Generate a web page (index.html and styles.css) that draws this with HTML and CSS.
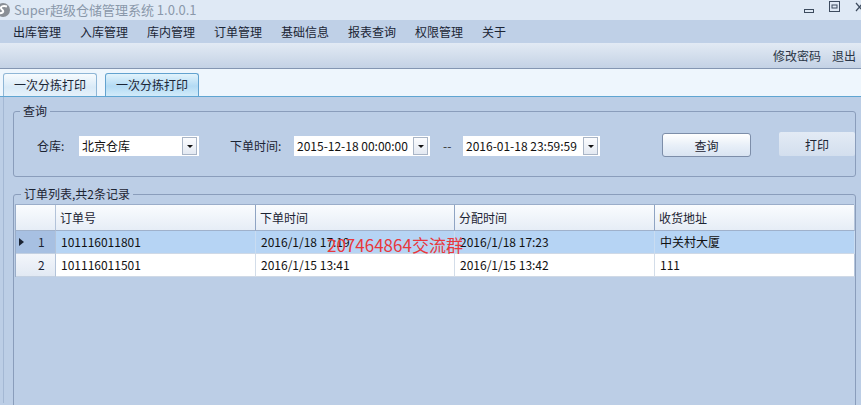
FILE: index.html
```html
<!DOCTYPE html>
<html lang="zh-CN">
<head>
<meta charset="utf-8">
<title>Super超级仓储管理系统 1.0.0.1</title>
<link rel="stylesheet" href="styles.css">
</head>
<body>
<div class="titlebar">
  <svg class="logo" width="14" height="16" viewBox="0 0 14 16"><circle cx="3" cy="8" r="7" fill="#8a8f96"/><path d="M7 4.5 C3 3 -1 5 2 7.5 C5 9.5 2 12 -2 11" stroke="#fff" stroke-width="2" fill="none"/></svg>
  <span class="title">Super超级仓储管理系统 1.0.0.1</span>
  <div class="winctl">
    <svg width="12" height="12" viewBox="0 0 12 12"><rect x="1.5" y="5.5" width="9" height="3" fill="none" stroke="#3d4b5e"/></svg>
    <svg width="12" height="12" viewBox="0 0 12 12" class="max"><rect x="0.5" y="0.5" width="10" height="10" fill="none" stroke="#3d4b5e"/><rect x="3" y="4" width="5" height="3" fill="none" stroke="#3d4b5e"/></svg>
    <svg width="6" height="12" viewBox="0 0 6 12" class="cls"><path d="M1 2 L8 10 M8 2 L1 10" stroke="#3d4b5e" stroke-width="1.2"/></svg>
  </div>
</div>
<nav class="menubar">
  <span>出库管理</span><span>入库管理</span><span>库内管理</span><span>订单管理</span><span>基础信息</span><span>报表查询</span><span>权限管理</span><span>关于</span>
</nav>
<div class="toolbar">
  <span>修改密码</span><span>退出</span>
</div>
<div class="tabstrip">
  <div class="tab">一次分拣打印</div>
  <div class="tab active">一次分拣打印</div>
</div>
<div class="page">
  <fieldset class="group query">
    <legend>查询</legend>
    <div class="qrow">
      <span class="lbl lbl-wh">仓库:</span>
      <div class="combo c1"><span>北京仓库</span><i class="dd"></i></div>
      <span class="lbl lbl-time">下单时间:</span>
      <div class="combo c2"><span>2015-12-18 00:00:00</span><i class="dd"></i></div>
      <span class="lbl lbl-dash">--</span>
      <div class="combo c3"><span>2016-01-18 23:59:59</span><i class="dd"></i></div>
      <button class="btn btn-q">查询</button>
      <button class="btn btn-p">打印</button>
    </div>
  </fieldset>
  <fieldset class="group orders">
    <legend>订单列表,共2条记录</legend>
    <div class="gridwrap">
      <div class="grid">
        <div class="hc rh"></div>
        <div class="hc">订单号</div>
        <div class="hc">下单时间</div>
        <div class="hc">分配时间</div>
        <div class="hc last">收货地址</div>

        <div class="rh sel"><span class="arrow"></span><span class="rn">1</span></div>
        <div class="dc sel">101116011801</div>
        <div class="dc sel">2016/1/18 17:19</div>
        <div class="dc sel">2016/1/18 17:23</div>
        <div class="dc sel last">中关村大厦</div>

        <div class="rh"><span class="rn">2</span></div>
        <div class="dc">101116011501</div>
        <div class="dc">2016/1/15 13:41</div>
        <div class="dc">2016/1/15 13:42</div>
        <div class="dc last">111</div>
      </div>
      <div class="watermark">207464864交流群</div>
    </div>
  </fieldset>
</div>
</body>
</html>
```
FILE: styles.css
```css
* { box-sizing: border-box; }
html, body {
  margin: 0;
  width: 861px;
  height: 405px;
  overflow: hidden;
}
body {
  background: #bccee6;
  font-family: "Noto Sans CJK SC", "Microsoft YaHei", sans-serif;
  font-size: 12px;
  color: #1c2433;
}
.titlebar {
  height: 20px;
  background: #dfe9f5;
  display: flex;
  align-items: center;
  position: relative;
}
.logo { margin-left: 0; flex: none; }
.title {
  margin-left: 0;
  font-size: 13px;
  color: #8a98aa;
  line-height: 20px;
}
.winctl {
  margin-left: auto;
  display: flex;
  align-items: center;
  gap: 14px;
  height: 20px;
}
.winctl .max { margin-top: -6px; }
.winctl .cls { margin-top: -6px; margin-left: 0; }
.menubar {
  height: 23px;
  background: #bfd0e7;
  display: flex;
  align-items: center;
  padding-left: 4px;
}
.menubar span {
  padding: 0 9.5px 0 9.5px;
  line-height: 23px;
  color: #1b2535;
}
.menubar span:first-child { padding-left: 9px; }
.toolbar {
  height: 26px;
  background: linear-gradient(#e2eaf4, #c4d2e5);
  border-bottom: 1px solid #8496b2;
  display: flex;
  justify-content: flex-end;
  align-items: center;
  gap: 11px;
  padding-right: 5px;
  color: #2a3546;
}
.tabstrip {
  height: 28px;
  background: #eef6fd;
  border-bottom: 1px solid #5fa5d2;
  display: flex;
  align-items: flex-end;
  padding-left: 3px;
  gap: 8px;
}
.tab {
  width: 94px;
  height: 23px;
  border: 1px solid #8fb6d6;
  border-bottom: none;
  border-radius: 3px 3px 0 0;
  background: linear-gradient(#f7fbfe, #d9eaf7 60%, #e6f1fa);
  text-align: center;
  line-height: 21px;
  color: #1b2535;
}
.tab.active {
  border-color: #62a2cf;
  background: linear-gradient(#e2f3fc, #b3dbf4 55%, #d2ebf9);
}
.page {
  margin-left: 3px;
  border-left: 1px solid #a4b8d4;
  height: 306px;
  padding-top: 6px;
}
.group {
  margin: 0 5px 0 9px;
  border: 1px solid #8a9dbb;
  border-radius: 3px;
  padding: 0;
  min-width: 0;
}
.group legend {
  margin-left: 6px;
  padding: 0 3px;
  line-height: 16px;
  font-size: 12px;
  color: #1c2433;
}
.query {
  padding: 14px 0 19px 0;
}
.qrow {
  display: flex;
  align-items: flex-start;
  height: 24px;
  padding-left: 23px;
}
.lbl {
  line-height: 20px;
  margin-top: 3px;
  flex: none;
}
.lbl-wh { width: 42px; }
.lbl-time { margin-left: 31px; width: 64px; }
.lbl-dash { margin-left: 13px; width: 20px; color: #333; }
.combo {
  position: relative;
  height: 20px;
  margin-top: 3px;
  background: #fff;
  flex: none;
}
.combo span {
  display: block;
  padding-left: 3px;
  line-height: 20px;
  color: #111;
}
.c1 { width: 120px; }
.c2 { width: 136px; }
.c3 { width: 137px; }
.dd {
  position: absolute;
  right: 2px;
  top: 1px;
  width: 15px;
  height: 18px;
  border: 1px solid #a9b5c6;
  background: linear-gradient(#fbfcfe, #e3e9f2);
}
.dd::after {
  content: "";
  position: absolute;
  left: 4px;
  top: 7px;
  border-left: 3px solid transparent;
  border-right: 3px solid transparent;
  border-top: 3px solid #111;
}
.btn {
  flex: none;
  height: 24px;
  font-family: inherit;
  font-size: 12px;
  color: #1c2433;
  padding: 0;
}
.btn-q {
  margin-left: 62px;
  width: 89px;
  border: 1px solid #7d8ea9;
  border-radius: 3px;
  background: linear-gradient(#ffffff, #e9f0f8 50%, #d9e4f2);
}
.btn-p {
  margin-left: 28px;
  width: 76px;
  border: none;
  border-radius: 2px;
  background: linear-gradient(#e3ebf5, #d3dfee);
  margin-top: -1px;
}
.orders {
  margin-top: 9px;
  height: 230px;
  padding: 2px 0 0 1px;
}
.gridwrap {
  position: relative;
}
.grid {
  display: grid;
  grid-template-columns: 40px 200px 199px 200px 200px;
  grid-template-rows: 26px 23px 23px;
  width: 839px;
  border-top: 1px solid #9aadc9;
  border-left: 1px solid #9aadc9;
}
.hc {
  background: linear-gradient(#fafcfe, #e6edf6);
  border-right: 1px solid #8fa4c3;
  border-bottom: 1px solid #9fb1cb;
  padding-left: 4px;
  line-height: 25px;
  color: #1c2433;
}
.dc {
  background: #fff;
  border-right: 1px solid #d3dde9;
  border-bottom: 1px solid #cfd9e6;
  padding-left: 5px;
  line-height: 22px;
  color: #111;
}
.dc.sel { background: #b6d4f4; border-right-color: #c9dcf1; }
.last { border-right-color: #b6c6dc; }
.rh {
  position: relative;
  background: linear-gradient(#f3f6fb, #e2e9f3);
  border-right: 1px solid #b3c3d9;
  border-bottom: 1px solid #c3d0e1;
  line-height: 22px;
}
.rh.sel { background: #a7c0e2; }
.rh.hc { background: linear-gradient(#fafcfe, #e6edf6); border-bottom-color: #9fb1cb; }
.rn {
  position: absolute;
  left: 22px;
  top: 0;
}
.arrow {
  position: absolute;
  left: 3px;
  top: 7px;
  border-top: 4px solid transparent;
  border-bottom: 4px solid transparent;
  border-left: 5px solid #1c2433;
}
.watermark {
  position: absolute;
  left: 312px;
  top: 29px;
  font-size: 17px;
  line-height: 23px;
  color: #e8383c;
  white-space: nowrap;
}
```
